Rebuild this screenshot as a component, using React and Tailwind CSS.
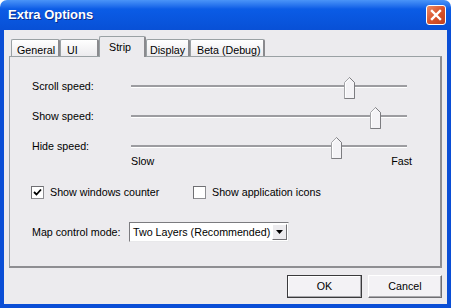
import React from 'react';

const tabs = [
  { label: 'General', w: 'w-[49px]', pl: 'pl-[5px]' },
  { label: 'UI', w: 'w-[39px]', pl: 'pl-[6px]' },
  { label: 'Strip', w: 'w-[47px]', pl: 'pl-[9px]', active: true },
  { label: 'Display', w: 'w-[44px]', pl: 'pl-[3px]' },
  { label: 'Beta (Debug)', w: 'w-[75px]', pl: 'pl-[6px]' },
];

const sliders = [
  { label: 'Scroll speed:', pos: 213 },
  { label: 'Show speed:', pos: 239 },
  { label: 'Hide speed:', pos: 200 },
];

const Thumb = ({ left }) => (
  <svg className="absolute top-[-10px]" style={{ left }} width="11" height="22" viewBox="0 0 11 22">
    <polygon points="0.5,5.5 5.5,0.5 10.5,5.5 10.5,21.5 0.5,21.5" fill="#f4f3f6" stroke="#a4a4a8" />
    <polyline points="5.5,0.5 10.5,5.5 10.5,21.5 0.5,21.5" fill="none" stroke="#7c7c80" />
    <polyline points="1.5,20.5 1.5,6 5.5,2" fill="none" stroke="#ffffff" />
  </svg>
);

const Checkbox = ({ checked }) => (
  <div className="w-[13px] h-[13px] bg-white border border-[#8d8d91] border-t-[#6f6f73] border-l-[#6f6f73] flex items-center justify-center shrink-0">
    {checked && (
      <svg width="9" height="9" viewBox="0 0 9 9">
        <path d="M1 4 L3.5 6.5 L8 1.5" fill="none" stroke="#000" strokeWidth="1.8" />
      </svg>
    )}
  </div>
);

export default function App() {
  return (
    <div className="w-[451px] h-[308px] bg-white font-['Liberation_Sans',Arial,sans-serif] text-[10.7px] text-black whitespace-nowrap">
      <div className="flex flex-col h-full rounded-t-[7px] overflow-hidden">
        {/* title bar */}
        <div className="h-[30px] flex items-center justify-between pl-[8px] pr-[5px] bg-gradient-to-b from-[#4a94f8] via-[#0b5ce6] via-30% to-[#0850d6]">
          <span className="text-white font-bold text-[13px] [text-shadow:1px_1px_#0b2b8a]">Extra Options</span>
          <div className="w-[20px] h-[20px] rounded-[3px] border border-white bg-gradient-to-br from-[#ec8a66] via-[#d9542c] to-[#c2401d] flex items-center justify-center">
            <svg width="12" height="12" viewBox="0 0 12 12">
              <path d="M2 2 L10 10 M10 2 L2 10" stroke="#fff" strokeWidth="2.4" strokeLinecap="square" />
            </svg>
          </div>
        </div>

        {/* body */}
        <div className="flex-1 flex flex-col bg-[#ecebee] border-x-4 border-b-4 border-[#0a4ed6] px-[5px] pt-[6px]">
          {/* tabs */}
          <div className="h-[20px] flex items-end pl-[2px] relative z-10">
            {tabs.map((t) =>
              t.active ? (
                <div key={t.label} className={`${t.w} ${t.pl} h-[21px] -mb-[1px] bg-[#ecebee] border border-b-0 border-[#9aa1a4] border-r-[#8a8a8e] border-r-2 rounded-t-[2px] pt-[2px]`}>
                  {t.label}
                </div>
              ) : (
                <div key={t.label} className={`${t.w} ${t.pl} h-[17px] bg-gradient-to-b from-white to-[#ecebee] border border-b-0 border-[#9aa1a4] border-r-[#8a8a8e] border-r-2 rounded-t-[2px] pt-[2px]`}>
                  {t.label}
                </div>
              )
            )}
          </div>

          {/* panel */}
          <div className="h-[212px] border border-[#9aa1a4] border-r-2 border-b-2 border-r-[#8e8e92] border-b-[#8e8e92] px-[22px] pt-[14px]">
            {sliders.map((s) => (
              <div key={s.label} className="h-[30px] flex items-center">
                <span className="w-[99px]">{s.label}</span>
                <div className="relative w-[276px] h-[3px] border-t-2 border-[#9c9ca0] border-b border-b-white">
                  <Thumb left={s.pos} />
                </div>
              </div>
            ))}
            <div className="-mt-[7px] h-[14px] flex items-center ml-[99px] w-[281px] justify-between">
              <span>Slow</span>
              <span>Fast</span>
            </div>

            <div className="mt-[16px] h-[16px] flex items-center -ml-[1px]">
              <div className="w-[162px] flex items-center gap-[6px]">
                <Checkbox checked />
                <span>Show windows counter</span>
              </div>
              <div className="flex items-center gap-[6px]">
                <Checkbox />
                <span>Show application icons</span>
              </div>
            </div>

            <div className="mt-[22px] h-[20px] flex items-center">
              <span className="w-[97px]">Map control mode:</span>
              <div className="w-[160px] h-[20px] bg-white border border-[#7b7b7f] border-r-[#e8e8ea] border-b-[#e8e8ea] flex items-center justify-between pl-[3px] pr-[1px] overflow-hidden">
                <span>Two Layers (Recommended)</span>
                <div className="w-[15px] h-[16px] shrink-0 bg-[#ecebee] border border-white border-r-[#6f6f73] border-b-[#6f6f73] flex items-center justify-center">
                  <svg width="7" height="4" viewBox="0 0 7 4">
                    <path d="M0 0 H7 L3.5 4 Z" fill="#000" />
                  </svg>
                </div>
              </div>
            </div>
          </div>

          {/* buttons */}
          <div className="flex justify-end gap-[6px] pt-[7px]">
            <button className="w-[75px] h-[23px] bg-[#f3f2f5] border border-[#3a3a3c] shadow-[inset_-1px_-1px_#a8a8ac,inset_1px_1px_#fff]">OK</button>
            <button className="w-[74px] h-[23px] bg-[#f3f2f5] border border-white border-r-[#6e6e72] border-b-[#6e6e72] shadow-[inset_-1px_-1px_#a8a8ac]">Cancel</button>
          </div>
        </div>
      </div>
    </div>
  );
}
